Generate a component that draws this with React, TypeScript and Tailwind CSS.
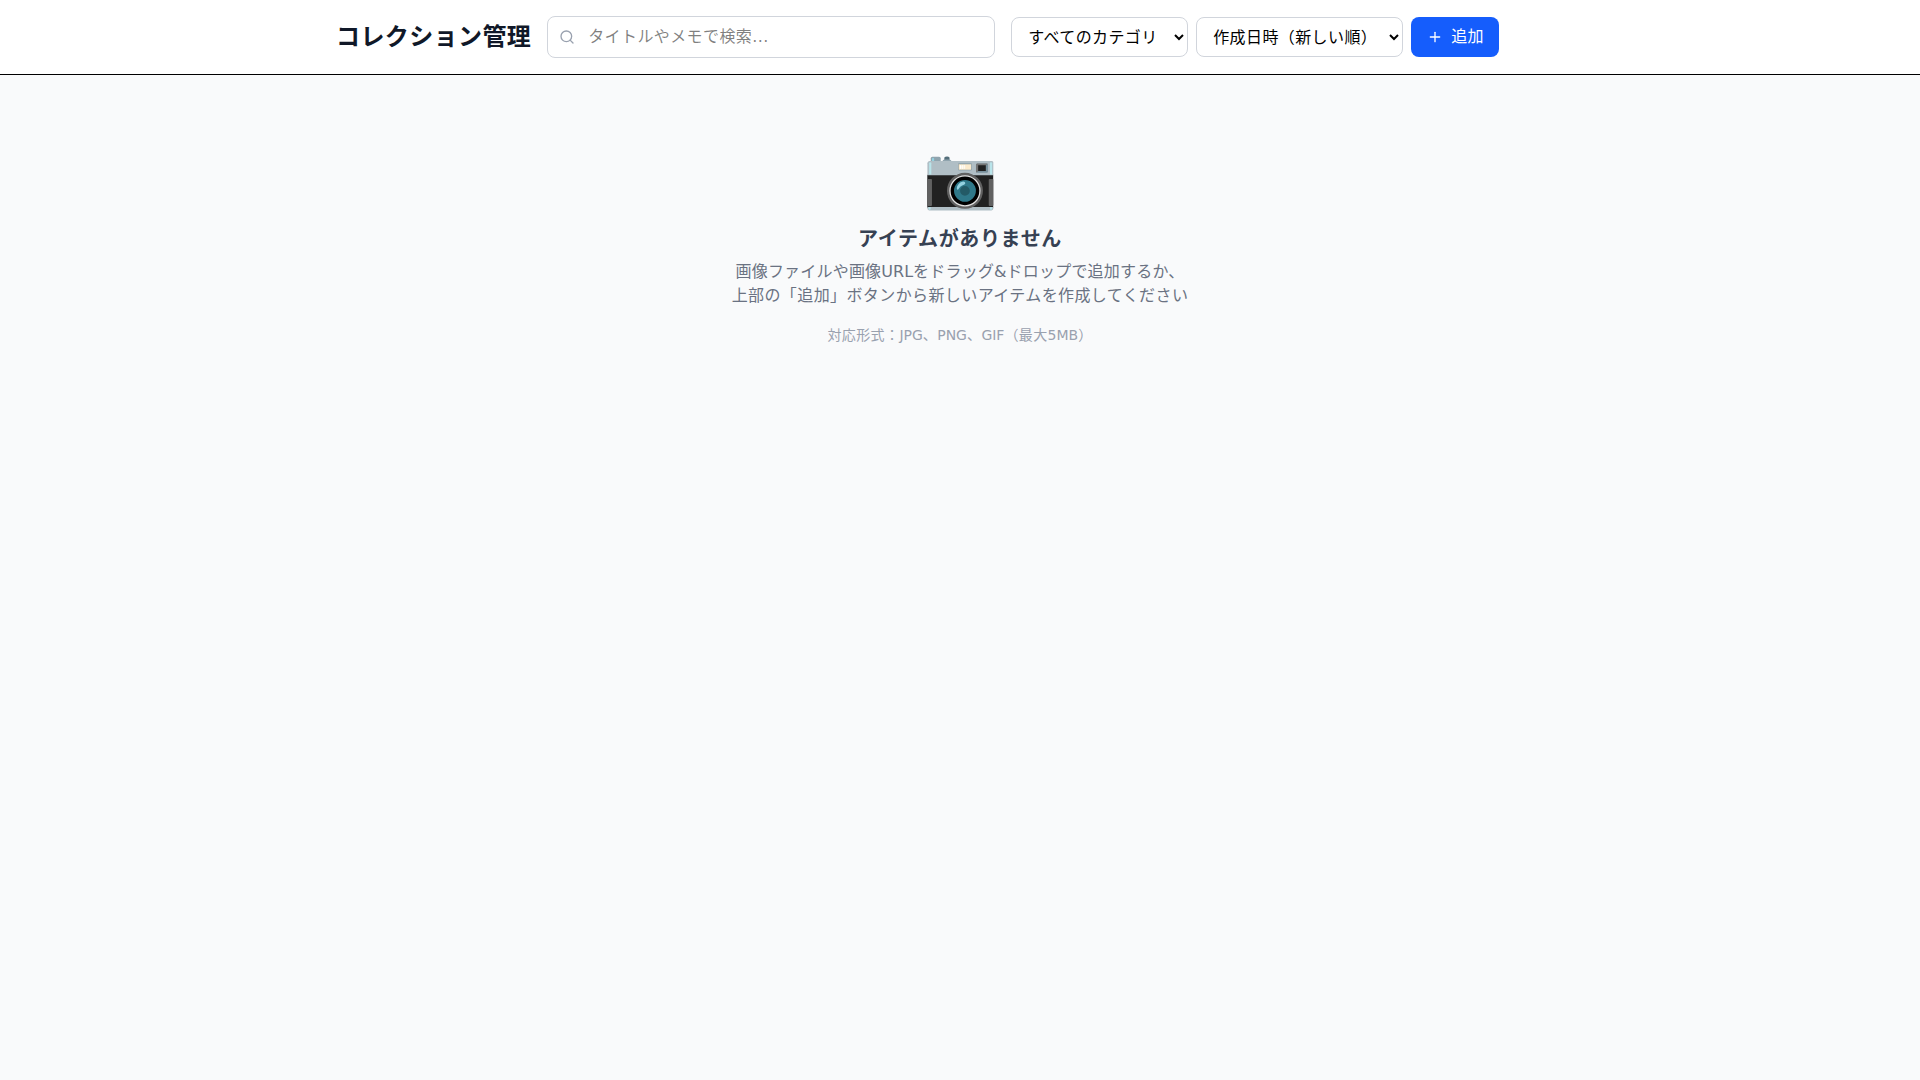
import { Plus, Search } from "lucide-react";

export default function App() {
  return (
    <div className="min-h-screen bg-gray-50 tracking-wide font-['DejaVu_Sans','Noto_Sans_CJK_JP',sans-serif]">
      <header className="bg-white border-b border-black">
        <div className="max-w-7xl mx-auto px-4 h-[74px] flex items-center">
          <h1 className="text-2xl font-bold text-gray-900 mr-4 whitespace-nowrap">コレクション管理</h1>
          <div className="relative w-[448px] mr-4">
            <Search className="absolute left-3 top-1/2 -translate-y-1/2 w-4 h-4 text-gray-400" />
            <input
              type="text"
              placeholder="タイトルやメモで検索..."
              className="w-full pl-10 pr-4 py-2 border border-gray-300 rounded-lg text-base"
            />
          </div>
          <div className="flex items-center gap-2">
            <select className="w-[177px] h-10 pl-3 pr-0 border border-gray-300 rounded-lg bg-white text-base">
              <option>すべてのカテゴリ</option>
            </select>
            <select className="w-[207px] h-10 pl-3 pr-0 border border-gray-300 rounded-lg bg-white text-base">
              <option>作成日時（新しい順）</option>
            </select>
            <button className="w-[88px] h-10 flex items-center gap-2 px-4 bg-blue-600 text-white rounded-lg text-base whitespace-nowrap">
              <Plus className="w-4 h-4 shrink-0" />
              追加
            </button>
          </div>
        </div>
      </header>
      <main className="flex flex-col items-center pt-[72px] text-center">
        <div className="text-6xl mb-[18px] tracking-normal">📷</div>
        <h2 className="text-xl font-semibold text-gray-700 mb-[7px] tracking-[0.65px]">アイテムがありません</h2>
        <p className="text-gray-500 mb-[17px]">
          <span className="tracking-[0.2px]">
            画像ファイルや画像<span className="tracking-normal">URL</span>をドラッグ<span className="tracking-normal">&</span>ドロップで追加するか、
          </span>
          <br />
          上部の「追加」ボタンから新しいアイテムを作成してください
        </p>
        <p className="text-sm text-gray-400">
          対応形式：<span className="tracking-normal">JPG</span>、<span className="tracking-normal">PNG</span>、<span className="tracking-normal">GIF</span>（最大<span className="tracking-normal">5MB</span>）
        </p>
      </main>
    </div>
  );
}
